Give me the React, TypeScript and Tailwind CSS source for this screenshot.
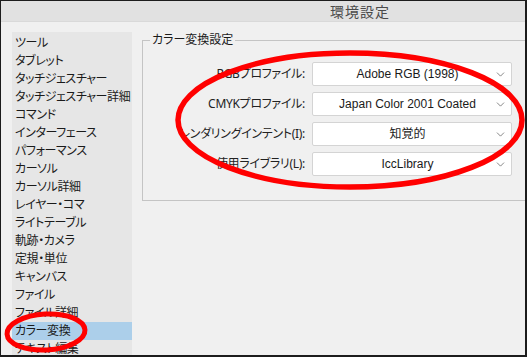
import React from 'react';
import { ChevronDown } from 'lucide-react';

const menuItems = [
  'ツール',
  'タブレット',
  'タッチジェスチャー',
  'タッチジェスチャー詳細',
  'コマンド',
  'インターフェース',
  'パフォーマンス',
  'カーソル',
  'カーソル詳細',
  'レイヤー・コマ',
  'ライトテーブル',
  '軌跡・カメラ',
  '定規・単位',
  'キャンバス',
  'ファイル',
  'ファイル詳細',
  'カラー変換',
  'テキスト編集',
];

const settings = [
  { label: 'RGBプロファイル:', value: 'Adobe RGB (1998)' },
  { label: 'CMYKプロファイル:', value: 'Japan Color 2001 Coated' },
  { label: 'レンダリングインテント(I):', value: '知覚的' },
  { label: '使用ライブラリ(L):', value: 'IccLibrary' },
];

const font = "font-['Noto_Sans','Noto_Sans_CJK_JP',sans-serif] [font-feature-settings:'palt']";

const App: React.FC = () => {
  return (
    <div className={`relative w-[527px] h-[357px] overflow-hidden bg-[#f0f0f0] border-l border-t border-r-2 border-b-2 border-[#1c1c1c] ${font}`}>
      {/* タイトルバー */}
      <div className="h-[21px] bg-[#e1e1e1] border-b border-[#d9d9d9] flex items-center pl-[329px]">
        <span className="text-[14px] text-[#4a4a4a] tracking-[1px]">環境設定</span>
      </div>

      <div className="flex pt-[10px]">
        {/* 左側のメニュー */}
        <div className="ml-[11px] w-[120px] h-[330px] bg-[#e6e6e6] pt-[2px] shrink-0">
          {menuItems.map((item) => (
            <div
              key={item}
              className={`h-[18px] leading-[18px] pl-[3px] text-[12px] text-[#1a1a1a] whitespace-nowrap tracking-[-0.4px] ${
                item === 'カラー変換' ? 'bg-[#accfea]' : ''
              }`}
            >
              {item}
            </div>
          ))}
        </div>

        {/* カラー変換設定 */}
        <div className="ml-[10px] pt-[1px] w-[420px] shrink-0">
          <fieldset className="border border-[#c4c4c4] pb-[24px] pt-[15px]">
            <legend className="ml-[7px] px-[2px] text-[12px] text-[#1a1a1a] leading-[14px]">
              カラー変換設定
            </legend>
            <div className="flex flex-col gap-[6px]">
              {settings.map((s) => (
                <div key={s.label} className="flex items-center">
                  <div className="w-[162px] text-right text-[12px] text-[#222] whitespace-nowrap tracking-[-0.3px]">{s.label}</div>
                  <div className="ml-[7px] w-[200px] h-[24px] bg-white border border-[#d4d4d4] rounded-[2px] flex items-center">
                    <span className="flex-1 text-center text-[12px] text-[#1a1a1a] pl-[8px] font-['Liberation_Sans','Noto_Sans_CJK_JP',sans-serif]">
                      {s.value}
                    </span>
                    <ChevronDown size={13} strokeWidth={1.3} className="text-[#555] mr-[4px]" />
                  </div>
                </div>
              ))}
            </div>
          </fieldset>
        </div>
      </div>

      {/* 赤い丸の注釈 */}
      <svg className="absolute left-0 top-0 pointer-events-none" width="527" height="357">
        <ellipse cx="349" cy="119" rx="172" ry="67" fill="none" stroke="#ff0000" strokeWidth="5.5" />
        <ellipse cx="45" cy="331" rx="39" ry="18" fill="none" stroke="#ff0000" strokeWidth="5" transform="rotate(-3 45 331)" />
      </svg>
    </div>
  );
};

export default App;
